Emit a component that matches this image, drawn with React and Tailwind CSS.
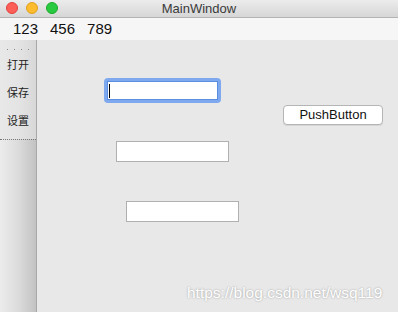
export default function App() {
  const cjk = { fontFamily: '"Noto Sans CJK SC", "Noto Sans", sans-serif' };
  return (
    <div
      className="w-[398px] h-[312px] flex flex-col bg-[#e8e8e8] overflow-hidden"
      style={{ fontFamily: '"Liberation Sans", Arial, sans-serif' }}
    >
      {/* Title bar */}
      <div className="relative h-[18px] flex items-center justify-center bg-gradient-to-b from-[#ececec] to-[#d6d6d6] border-b border-[#b4b4b4]">
        <div className="absolute left-[6px] top-[2px] flex gap-[8px]">
          <div className="w-[12px] h-[12px] rounded-full bg-[#fc5f57] border border-[#e0443e]" />
          <div className="w-[12px] h-[12px] rounded-full bg-[#fdbc2e] border border-[#dea123]" />
          <div className="w-[12px] h-[12px] rounded-full bg-[#29c940] border border-[#1aab29]" />
        </div>
        <span className="text-[13px] leading-none text-[#3a3a3a]">MainWindow</span>
      </div>

      {/* Menu bar */}
      <div className="h-[22px] flex items-center bg-[#f6f6f6] pl-[13px] gap-[12px] text-[15px] text-[#111]">
        <span>123</span>
        <span>456</span>
        <span>789</span>
      </div>

      <div className="flex-1 flex">
        {/* Toolbar */}
        <div className="w-[37px] flex flex-col bg-gradient-to-r from-[#ececec] via-[#dcdcdc] to-[#c2c2c2] border-r border-[#a8a8a8]">
          <div className="h-[99px] bg-gradient-to-r from-[#e8e8e8] via-[#e4e4e4] to-[#d8d8d8] flex flex-col items-center">
            <div className="mt-[9px] flex gap-[6px]">
              <span className="w-[1px] h-[1px] bg-[#888]" />
              <span className="w-[1px] h-[1px] bg-[#888]" />
              <span className="w-[1px] h-[1px] bg-[#888]" />
              <span className="w-[1px] h-[1px] bg-[#888]" />
            </div>
            <div className="mt-[7px] flex flex-col gap-[13px] text-[11px] leading-[15px] text-[#222]" style={cjk}>
              <span>打开</span>
              <span>保存</span>
              <span>设置</span>
            </div>
          </div>
          <div className="border-t border-dotted border-[#777]" />
        </div>

        {/* Central widget */}
        <div className="relative flex-1">
          <div className="absolute left-[67px] top-[38px] w-[117px] h-[25px] rounded-[4px] bg-[#7ea9ef] p-[3px]">
            <div className="w-full h-full bg-white border border-[#5b8de0] flex items-center pl-[1px]">
              <div className="w-[1px] h-[14px] bg-black" />
            </div>
          </div>
          <div className="absolute left-[79px] top-[101px] w-[113px] h-[21px] bg-white border border-[#b0b0b0]" />
          <div className="absolute left-[89px] top-[161px] w-[113px] h-[21px] bg-white border border-[#b0b0b0]" />
          <div className="absolute left-[246px] top-[65px] w-[100px] h-[20px] rounded-[4px] bg-white border border-[#b5b5b5] shadow-[0_1px_0_rgba(0,0,0,0.08)] flex items-center justify-center text-[13px] text-[#111]">
            PushButton
          </div>
          <div className="absolute left-[150px] top-[241px] text-[15.5px] text-white [text-shadow:0_0_2px_rgba(0,0,0,0.35)]">
            https://blog.csdn.net/wsq119
          </div>
        </div>
      </div>
    </div>
  );
}
